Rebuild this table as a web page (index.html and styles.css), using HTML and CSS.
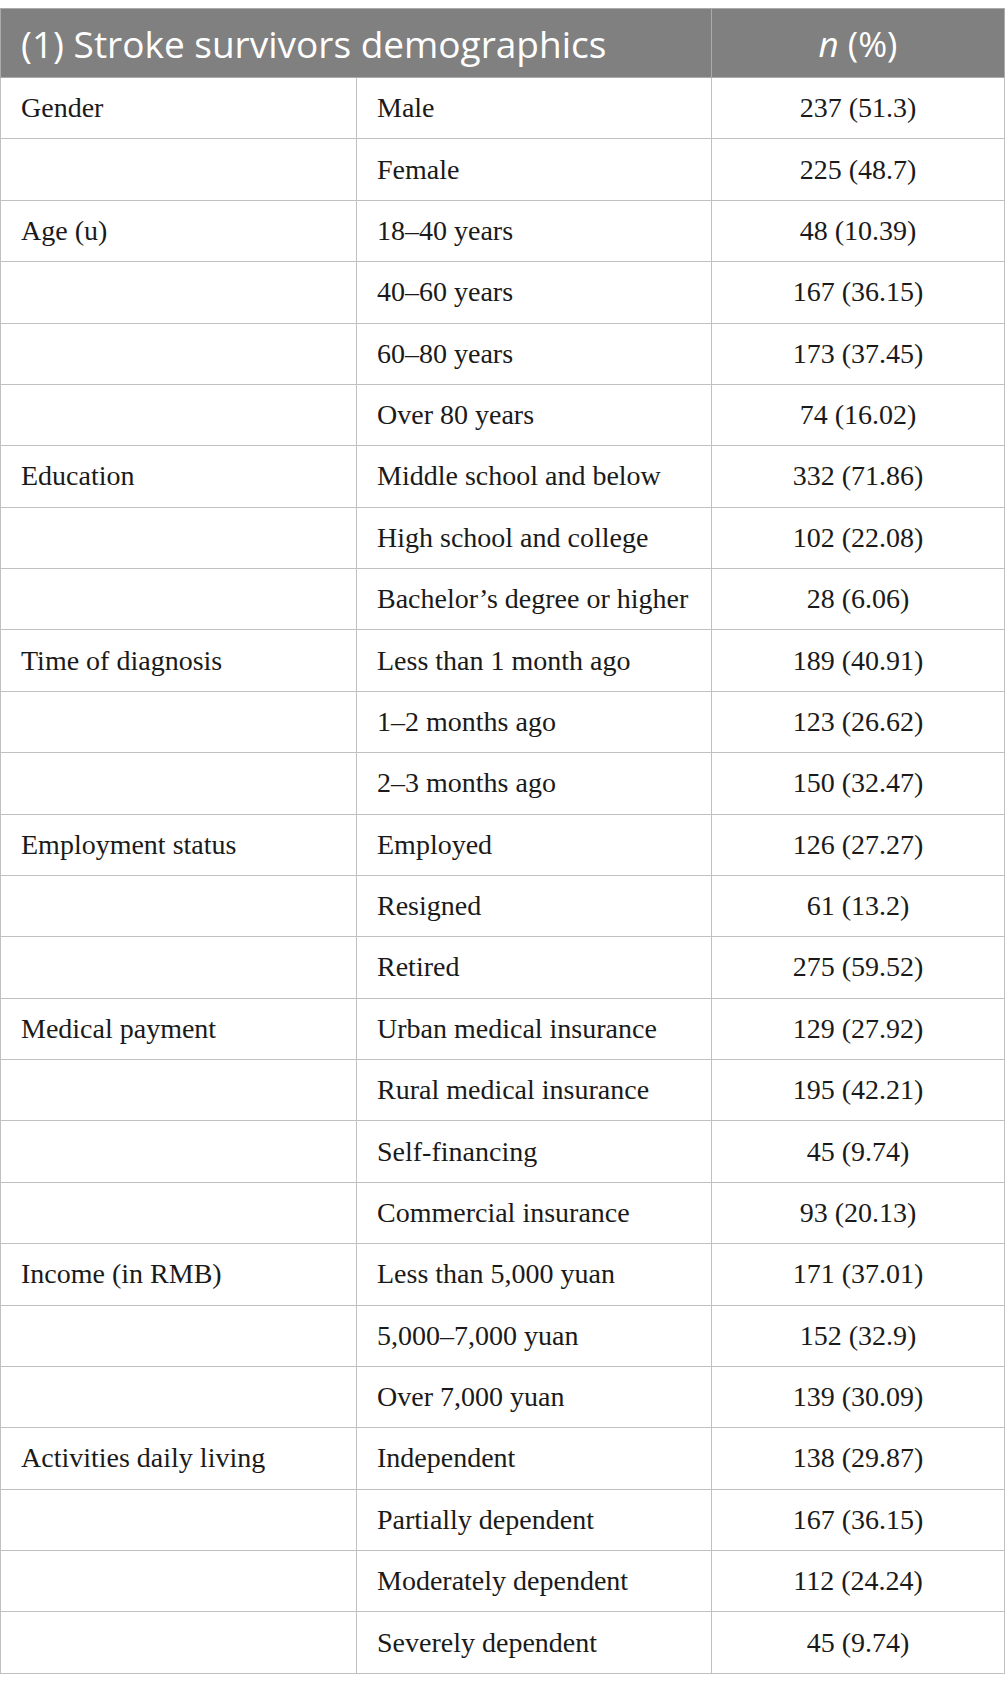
FILE: index.html
```html
<!DOCTYPE html>
<html>
<head>
<meta charset="utf-8">
<link rel="stylesheet" href="styles.css">
</head>
<body>
<div class="wrap">
<table class="demo">
<colgroup><col class="c1"><col class="c2"><col class="c3"></colgroup>
<thead>
<tr><th colspan="2" class="h-left">(1) Stroke survivors demographics</th><th class="h-right"><i>n</i> (%)</th></tr>
</thead>
<tbody>
<tr><td>Gender</td><td>Male</td><td class="num">237 (51.3)</td></tr>
<tr><td></td><td>Female</td><td class="num">225 (48.7)</td></tr>
<tr><td>Age (u)</td><td>18–40 years</td><td class="num">48 (10.39)</td></tr>
<tr><td></td><td>40–60 years</td><td class="num">167 (36.15)</td></tr>
<tr><td></td><td>60–80 years</td><td class="num">173 (37.45)</td></tr>
<tr><td></td><td>Over 80 years</td><td class="num">74 (16.02)</td></tr>
<tr><td>Education</td><td>Middle school and below</td><td class="num">332 (71.86)</td></tr>
<tr><td></td><td>High school and college</td><td class="num">102 (22.08)</td></tr>
<tr><td></td><td>Bachelor’s degree or higher</td><td class="num">28 (6.06)</td></tr>
<tr><td>Time of diagnosis</td><td>Less than 1 month ago</td><td class="num">189 (40.91)</td></tr>
<tr><td></td><td>1–2 months ago</td><td class="num">123 (26.62)</td></tr>
<tr><td></td><td>2–3 months ago</td><td class="num">150 (32.47)</td></tr>
<tr><td>Employment status</td><td>Employed</td><td class="num">126 (27.27)</td></tr>
<tr><td></td><td>Resigned</td><td class="num">61 (13.2)</td></tr>
<tr><td></td><td>Retired</td><td class="num">275 (59.52)</td></tr>
<tr><td>Medical payment</td><td>Urban medical insurance</td><td class="num">129 (27.92)</td></tr>
<tr><td></td><td>Rural medical insurance</td><td class="num">195 (42.21)</td></tr>
<tr><td></td><td>Self-financing</td><td class="num">45 (9.74)</td></tr>
<tr><td></td><td>Commercial insurance</td><td class="num">93 (20.13)</td></tr>
<tr><td>Income (in RMB)</td><td>Less than 5,000 yuan</td><td class="num">171 (37.01)</td></tr>
<tr><td></td><td>5,000–7,000 yuan</td><td class="num">152 (32.9)</td></tr>
<tr><td></td><td>Over 7,000 yuan</td><td class="num">139 (30.09)</td></tr>
<tr><td>Activities daily living</td><td>Independent</td><td class="num">138 (29.87)</td></tr>
<tr><td></td><td>Partially dependent</td><td class="num">167 (36.15)</td></tr>
<tr><td></td><td>Moderately dependent</td><td class="num">112 (24.24)</td></tr>
<tr><td></td><td>Severely dependent</td><td class="num">45 (9.74)</td></tr>
</tbody>
</table>
</div>
</body>
</html>
```

FILE: styles.css
```css
html, body {
  margin: 0;
  padding: 0;
  background: #ffffff;
}
.wrap {
  padding-top: 8px;
  width: 1004px;
}
.demo {
  width: 1004px;
  border-collapse: collapse;
  table-layout: fixed;
  font-family: "Liberation Serif", "Times New Roman", serif;
  font-size: 28px;
  color: #1a1a1a;
}
.c1 { width: 356px; }
.c2 { width: 355px; }
.c3 { width: 293px; }
.demo th {
  background: #808080;
  color: #ffffff;
  font-family: "Open Sans", "Liberation Sans", sans-serif;
  font-weight: 400;
  font-size: 37px;
  line-height: 1;
  height: 68px;
  padding: 0 20px;
  border: 1.5px solid #ababab;
  vertical-align: middle;
  white-space: nowrap;
}
.h-left { text-align: left; }
.demo th.h-right {
  text-align: center;
  font-size: 35px;
}
.demo td {
  height: 61.38px;
  box-sizing: border-box;
  padding: 0 20px;
  border: 1.5px solid #c0c0c0;
  vertical-align: middle;
  white-space: nowrap;
  line-height: 1;
}
.demo td.num { text-align: center; }
```
